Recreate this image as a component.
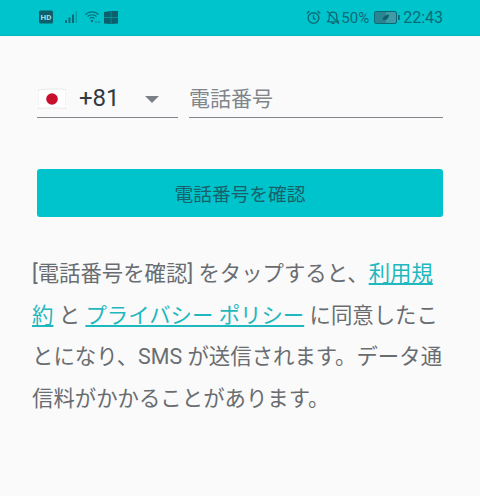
<div class="page">
  <header class="status">
    <div class="left">
      <svg class="hd" width="14" height="14" viewBox="0 0 14 14"><rect width="14" height="13" y="0.5" rx="1.5" fill="#0c5f6b"/><text x="7" y="10" text-anchor="middle" font-size="8" font-weight="700" fill="#9fdfe3" font-family="Roboto">HD</text></svg>
      <svg class="sig" width="15" height="14" viewBox="0 0 15 14" fill="#0c6a76"><rect x="0" y="10" width="2" height="3"/><rect x="3.5" y="7.5" width="2" height="5.5"/><rect x="7" y="4.5" width="2" height="8.5"/><rect x="10.5" y="1" width="1.5" height="12" opacity=".4"/></svg>
      <svg class="wifi" width="15" height="14" viewBox="0 0 15 14" fill="none" stroke="#0c6a76" stroke-width="1.1"><path d="M.5 4.5C4 1 10 1 13.500 4.500M2.500 6.500C5 4.200 9 4.200 11.500 6.500M4.500 8.500C6 7.300 8 7.300 9.500 8.500"/><circle cx="7" cy="11" r="1.200" fill="#0c6a76" stroke="none"/><circle cx="11" cy="12" r=".8" fill="#0c6a76" stroke="none"/><circle cx="14" cy="12" r=".8" fill="#0c6a76" stroke="none"/></svg>
      <svg class="app" width="14" height="13" viewBox="0 0 14 13" fill="#0c5f6b"><path d="M0 1l6.800-1v6.200H0zM7.200 0L14 0v6.200H7.200zM0 6.800h6.800V13L0 12.500zM7.200 6.800H14v5.700L7.200 13z"/></svg>
    </div>
    <div class="right">
      <svg class="alarm" width="15" height="15" viewBox="0 0 14 14" fill="none" stroke="#0c6a76" stroke-width="1.300"><circle cx="7" cy="7.500" r="5"/><path d="M7 4.500v3.300l2 1.200M.8 3.200L3.200 1M13.200 3.200L10.800 1"/></svg>
      <svg class="bell" width="14" height="15" viewBox="0 0 13 14" fill="none" stroke="#0c6a76" stroke-width="1.200"><path d="M1.500 11h10L10 8.500V5.500C10 3.500 8.500 2 6.500 2S3 3.500 3 5.500v3zM5 12.500h3M1 1l11 12"/></svg>
      <span class="pct">50%</span>
      <svg class="batt" width="26" height="13" viewBox="0 0 26 13"><rect x=".5" y=".5" width="22" height="12" rx="1.500" fill="#3f9ba5" stroke="#0c6a76"/><rect x="1" y="1" width="11" height="11" fill="#2a8590"/><rect x="24" y="4" width="1.800" height="5" fill="#0c6a76"/><path d="M8.500 9C9 5.500 12 4 15 3.500 15 7 12.500 9.500 8.500 9z" fill="#0c5f6b"/></svg>
      <span class="time">22:43</span>
    </div>
  </header>

  <main class="content">
    <div class="phone">
      <div class="country">
        <svg class="flag" width="28" height="22" viewBox="0 0 28 22"><path d="M0 2C9 .7 19 .7 28 1.500v19c-9-.8-19-.8-28 0z" fill="#fff" stroke="#dcdcdc" stroke-width=".6"/><circle cx="14" cy="11" r="5.800" fill="#c8102e"/></svg>
        <span class="code">+81</span>
        <span class="caret"></span>
      </div>
      <div class="number">電話番号</div>
    </div>

    <button class="verify">電話番号を確認</button>

    <p class="terms">[電話番号を確認] をタップすると、<a href="#a">利用規約</a> と <a href="#b">プライバシー ポリシー</a> に同意したことになり、SMS が送信されます。データ通信料がかかることがあります。</p>
  </main>
</div>

<style>
  :global(body) {
    margin: 0;
    background: #fafafa;
    font-family: Roboto, "Noto Sans CJK JP", sans-serif;
  }
  .page {
    width: 480px;
    height: 496px;
    overflow: hidden;
    background: #fafafa;
  }
  .status {
    height: 36px;
    background: #00c4cc;
    border-bottom: 1px solid #06b6bd;
    display: flex;
    justify-content: space-between;
    align-items: center;
    padding: 0 37px 0 39px;
    color: #0c6a76;
    box-sizing: border-box;
  }
  .left, .right { display: flex; align-items: center; }
  .left { padding-bottom: 1px; }
  .sig { margin-left: 12px; }
  .wifi { margin-left: 5px; }
  .app { margin-left: 4px; }
  .right { font-size: 16px; }
  .bell { margin-left: 5px; }
  .pct { margin-left: 1px; font-size: 15px; }
  .batt { margin-left: 5px; }
  .time { margin-left: 3px; }
  .content { padding: 0 37px; }
  .phone {
    display: flex;
    gap: 11px;
    padding-top: 45px;
  }
  .country {
    width: 141px;
    height: 37px;
    border-bottom: 1.500px solid #80868b;
    display: flex;
    align-items: center;
    box-sizing: border-box;
    padding-left: 1px;
  }
  .code {
    font-size: 24px;
    color: #333b40;
    margin: 0 0 2px 13px;
  }
  .caret {
    margin-left: 25px;
    width: 0;
    height: 0;
    border-left: 7px solid transparent;
    border-right: 7px solid transparent;
    border-top: 7px solid #7a8085;
  }
  .number {
    flex: 1;
    height: 37px;
    border-bottom: 1.500px solid #80868b;
    box-sizing: border-box;
    font-size: 21px;
    line-height: 36px;
    color: #80868b;
  }
  .verify {
    display: block;
    width: 100%;
    height: 48px;
    margin-top: 51px;
    padding: 0 0 2px;
    border: 0;
    border-radius: 3px;
    background: #00c4cc;
    color: #17626a;
    font: inherit;
    font-size: 18.7px;
  }
  .terms {
    margin: 36px 0 0 -5px;
    width: 412px;
    font-size: 21.4px;
    line-height: 41.5px;
    color: #696d71;
  }
  .terms a { color: #1fb8be; }
</style>
